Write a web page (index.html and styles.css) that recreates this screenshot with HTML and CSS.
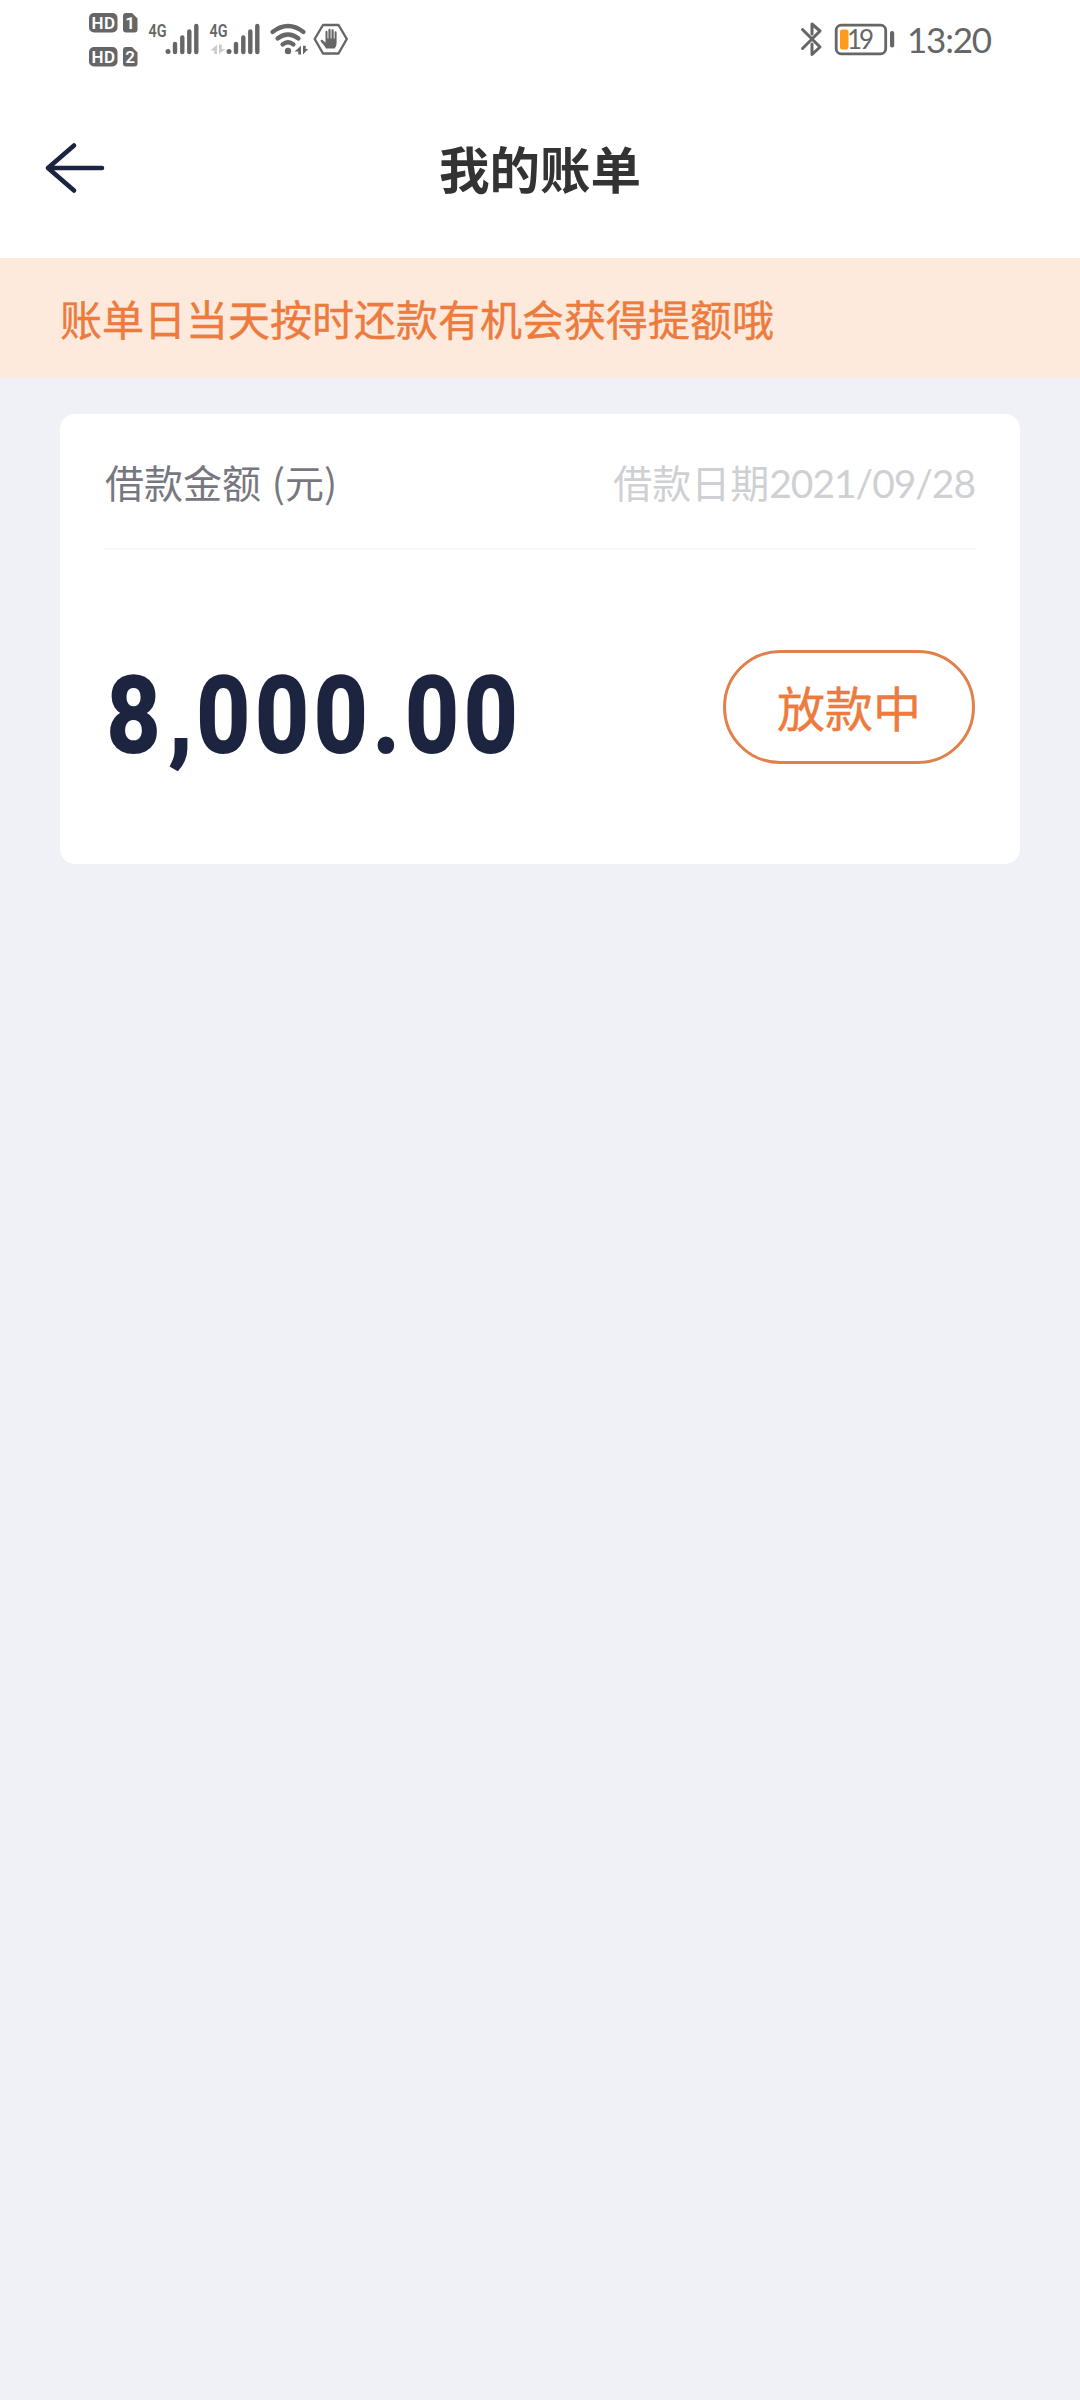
FILE: index.html
```html
<!DOCTYPE html>
<html lang="zh-CN">
<head>
<meta charset="utf-8">
<title>我的账单</title>
<link rel="stylesheet" href="styles.css">
</head>
<body>
<div class="status-bar">
  <div class="status-left">
    <svg class="hd" width="50" height="56" viewBox="88 12 50 56">
      <rect x="89" y="13" width="28.500" height="19.500" rx="5"/>
      <path d="M126 13h6l5.500 5.500v11a3 3 0 0 1-3 3h-8.500a3 3 0 0 1-3-3v-13.500a3 3 0 0 1 3-3z"/>
      <rect x="89" y="47" width="28.500" height="19.500" rx="5"/>
      <path d="M126 47h6l5.500 5.500v11a3 3 0 0 1-3 3h-8.500a3 3 0 0 1-3-3v-13.500a3 3 0 0 1 3-3z"/>
      <text class="badge" x="91.500" y="29" textLength="23.500">HD</text>
      <text class="badge" x="125.300" y="29">1</text>
      <text class="badge" x="91.500" y="63" textLength="23.500">HD</text>
      <text class="badge" x="125.300" y="63">2</text>
    </svg>
    <svg class="signal" width="52" height="34" viewBox="148 22 52 34">
      <text class="net" x="148.500" y="37" textLength="18" lengthAdjust="spacingAndGlyphs">4G</text>
      <circle cx="168" cy="51.500" r="2.500"/>
      <path class="bars" d="M175 44v8M182.300 37.500v14.500M189.300 31.500v20.500M196.300 26v26"/>
    </svg>
    <svg class="signal" width="52" height="34" viewBox="148 22 52 34">
      <text class="net" x="148.500" y="37" textLength="18" lengthAdjust="spacingAndGlyphs">4G</text>
      <path class="data-off" d="M149.500 50.500l6.500-6v9.500h-2.800v-3.500zM158 44.500h2.800v4.500h3.700l-6.500 5z"/>
      <circle cx="168" cy="51.500" r="2.500"/>
      <path class="bars" d="M175 44v8M182.300 37.500v14.500M189.300 31.500v20.500M196.300 26v26"/>
    </svg>
    <svg class="wifi" width="40" height="34" viewBox="268 22 40 34">
      <path class="arc" d="M271.500 32Q287 20 302.500 32M276.500 38.500Q287 30.500 297.500 38.500M281.500 44.500Q287 40 292.500 44.500"/>
      <circle cx="287" cy="51" r="3.200"/>
      <path d="M293.500 51.500l6.500-5.800v8.800h-2.800v-3zM302 45.700h2.700v3.300h2.500l-5.200 5.500z"/>
    </svg>
    <svg width="36" height="34" viewBox="312.500 22 36 34">
      <path class="hex" d="M322.500 25h15.500l8.300 14-8.300 14.500h-15.500l-8.300-14.500z"/>
      <path d="M325.500 48.500c-1.200-2.500-3.300-4.800-5.200-7-.8-1.500 1-2.300 2-1.300l2.700 2.500V32c0-1.600 2-1.600 2 0v6.500h.9v-8.500c0-1.700 2.200-1.700 2.200 0v8.500h.9v-8c0-1.700 2.200-1.700 2.200 0v8h.9v-6c0-1.600 2-1.600 2 0v10.500c0 2.500-1 4-2 5.500z"/>
    </svg>
  </div>
  <div class="status-right">
    <svg width="23" height="36" viewBox="800 21 23 36">
      <path class="bt" d="M802.500 29.500L810.500 37.500 820 47 812 54.500V44M812 34V24L820 31 802.500 48.500"/>
    </svg>
    <svg width="62" height="34" viewBox="834 22 62 34">
      <rect class="cell" x="836.200" y="25.200" width="49.500" height="28.600" rx="5"/>
      <rect class="charge" x="840" y="29.500" width="8.500" height="20" rx="2"/>
      <rect x="890" y="31" width="4.200" height="16.500" rx="2"/>
      <text class="level" x="847" y="49" textLength="27">19</text>
    </svg>
    <span class="clock">13:20</span>
  </div>
</div>
<header class="nav">
  <svg class="back" width="62" height="54" viewBox="44 141 62 54">
    <path d="M74 145.500L48 168L74 190.500M48 168H102"/>
  </svg>
  <h1>我的账单</h1>
</header>
<div class="notice">账单日当天按时还款有机会获得提额哦</div>
<main class="card">
  <div class="card-head">
    <span class="label">借款金额 (元)</span>
    <span class="date">借款日期<span class="num">2021/09/28</span></span>
  </div>
  <div class="card-body">
    <span class="amount">8<span class="comma">,</span>000.00</span>
    <span class="state">放款中</span>
  </div>
</main>
</body>
</html>
```
FILE: styles.css
```css
* { box-sizing: border-box; }
body {
  margin: 0;
  min-height: 2400px;
  background: #f0f1f6;
  font-family: "Noto Sans CJK SC", sans-serif;
}
svg { display: block; fill: #666; overflow: visible; }

.status-bar {
  height: 80px;
  padding: 0 90px 0 88px;
  display: flex;
  justify-content: space-between;
  background: #fff;
}
.status-left, .status-right { display: flex; align-items: flex-start; padding-top: 22px; }
.hd { margin: -10px 10px 0 0; }
.signal { margin-right: 9px; }
.wifi { margin: 0 4px 0 -1px; }
.badge { font: 600 17px Roboto, sans-serif; fill: #fff; }
.net { font: 600 18px Roboto, sans-serif; }
.bars { fill: none; stroke: #666; stroke-width: 4.4; stroke-linecap: round; }
.data-off { fill: #ccc; }
.arc { fill: none; stroke: #666; stroke-width: 4.2; stroke-linecap: round; }
.hex { fill: none; stroke: #666; stroke-width: 2.4; stroke-linejoin: round; }
.bt { fill: none; stroke: #666; stroke-width: 3; stroke-linejoin: round; stroke-linecap: round; }
.status-right svg:first-child { margin: -1px 11px 0 0; }
.cell { fill: none; stroke: #666; stroke-width: 2.8; }
.charge { fill: #fe9b1d; }
.level { font: 400 26px Lato, sans-serif; }
.clock {
  width: 83px;
  margin: -3px 0 0 11px;
  font: 400 35px/40px Lato, sans-serif;
  letter-spacing: -1.2px;
  color: #666;
  white-space: nowrap;
}

.nav {
  height: 178px;
  padding: 0 44px;
  display: grid;
  grid-template-columns: 62px 1fr 62px;
  align-items: start;
  background: #fff;
}
.back { margin-top: 61px; fill: none; stroke: #1c2440; stroke-width: 4.6; stroke-linecap: round; stroke-linejoin: round; }
h1 {
  margin: 52px 0 0;
  text-align: center;
  font-size: 50.5px;
  line-height: 70px;
  font-weight: 700;
  color: #333;
}

.notice {
  height: 120px;
  padding-left: 60px;
  background: #fdeadd;
  color: #ed7b3d;
  font-size: 42px;
  line-height: 119px;
  -webkit-text-stroke: .4px;
}

.card {
  width: 960px;
  height: 450px;
  margin: 36px auto 0;
  padding: 0 45px;
  border-radius: 15px;
  background: #fff;
}
.card-head {
  height: 136px;
  display: flex;
  justify-content: space-between;
  border-bottom: 2px solid #f8f8fa;
  font-size: 39px;
  line-height: 134px;
}
.label { color: #77787f; word-spacing: 2px; }
.date { color: #cfd0d4; }
.num { font-family: Lato, sans-serif; letter-spacing: -1.05px; }
.card-body {
  height: 314px;
  display: flex;
  justify-content: space-between;
  align-items: center;
}
.amount {
  padding: 17px 0 0 2px;
  font: 700 106px/120px Roboto, sans-serif;
  letter-spacing: 6px;
  color: #1c2440;
  -webkit-text-stroke: 2px;
  transform: scaleX(.88);
  transform-origin: left;
}
.comma { margin: 0 -1px 0 4px; }
.state {
  width: 252px;
  height: 114px;
  border: 3px solid #e2804c;
  border-radius: 57px;
  text-align: center;
  color: #ed7b3d;
  font-size: 48px;
  line-height: 107px;
  -webkit-text-stroke: .4px;
}
```
